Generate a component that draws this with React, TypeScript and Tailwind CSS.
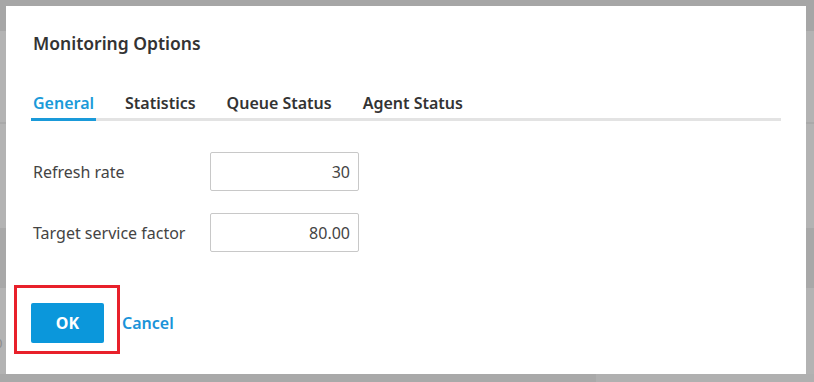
import React from "react";

const font = { fontFamily: '"Noto Sans", "Open Sans", sans-serif' };

export default function App() {
  const tabs = ["General", "Statistics", "Queue Status", "Agent Status"];
  return (
    <div className="relative w-[814px] h-[382px] overflow-hidden bg-[#b3b3b3]" style={font}>
      {/* dimmed page behind */}
      <div className="flex flex-col w-full h-full">
        <div className="h-[31px] bg-[#a6a6a6]" />
        <div className="h-[91px] bg-[#b3b3b3]" />
        <div className="h-[2px] bg-[#a9a9a9]" />
        <div className="h-[104px] bg-[#b3b3b3]" />
        <div className="h-[60px] bg-[#a8a8a8]" />
        <div className="h-[86px] bg-[#b3b3b3] relative">
          <span className="absolute left-[-5px] top-[48px] text-[13px] leading-[14px] text-[#8c8c8c]">0</span>
        </div>
        <div className="flex h-[8px]">
          <div className="w-[596px] bg-[#a9a9a9]" />
          <div className="flex-1 bg-[#b0b0b0]" />
        </div>
      </div>

      {/* dialog */}
      <div className="absolute left-[6px] top-[6px] w-[800px] h-[368px] bg-white px-[25px] pt-[25px] flex flex-col">
        <div className="pl-[2px] text-[17.5px] leading-[24px] font-semibold text-[#333333]">Monitoring Options</div>

        <div className="mt-[36px] flex gap-[27px] border-b-[3px] border-[#e3e3e3]">
          {tabs.map((t, i) => (
            <div
              key={t}
              className={
                i === 0
                  ? "-mb-[3px] px-[2px] pb-[3px] border-b-[3px] border-[#1a9ad9] text-[16px] leading-[24px] font-semibold text-[#1a9ad9]"
                  : "-mb-[3px] px-[2px] pb-[3px] border-b-[3px] border-transparent text-[16px] leading-[24px] font-semibold text-[#333333]"
              }
            >
              {t}
            </div>
          ))}
        </div>

        <div className="mt-[31px] flex flex-col gap-[22px] pl-[2px]">
          <div className="flex items-center h-[39px]">
            <div className="w-[177px] text-[16px] text-[#444444]">Refresh rate</div>
            <div className="w-[149px] h-[39px] border border-[#c8c8c8] rounded-[2px] flex items-center justify-end pr-[8px] text-[16px] text-[#444444]">
              30
            </div>
          </div>
          <div className="flex items-center h-[39px]">
            <div className="w-[177px] text-[16px] text-[#444444]">Target service factor</div>
            <div className="w-[149px] h-[39px] border border-[#c8c8c8] rounded-[2px] flex items-center justify-end pr-[8px] text-[16px] text-[#444444]">
              80.00
            </div>
          </div>
        </div>

        <div className="mt-[51px] flex items-center gap-[18px]">
          <div className="relative">
            <button className="w-[73px] h-[40px] rounded-[2px] bg-[#0b97db] text-white text-[16px] font-bold flex items-center justify-center">
              OK
            </button>
            <div className="absolute left-[-17px] top-[-18px] w-[106px] h-[69px] border-[3px] border-[#e8202a]" />
          </div>
          <span className="text-[16px] font-semibold text-[#1a93d9]">Cancel</span>
        </div>
      </div>
    </div>
  );
}
